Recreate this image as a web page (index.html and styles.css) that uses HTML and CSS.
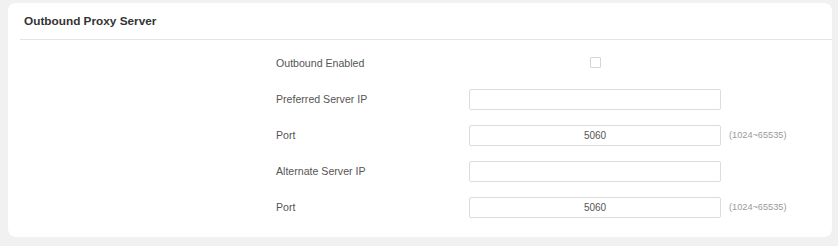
FILE: index.html
```html
<!DOCTYPE html>
<html lang="en">
<head>
  <meta charset="UTF-8" />
  <title>Outbound Proxy Server</title>
  <link rel="stylesheet" href="styles.css">
</head>
<body>
  <div class="card">
    <div class="card-header">
      <h3>Outbound Proxy Server</h3>
    </div>
    <div class="form">
      <div class="row">
        <label class="label">Outbound Enabled</label>
        <div class="field center">
          <span class="check"></span>
        </div>
      </div>
      <div class="row">
        <label class="label">Preferred Server IP</label>
        <div class="field"><input type="text" value=""></div>
      </div>
      <div class="row">
        <label class="label">Port</label>
        <div class="field"><input type="text" value="5060"></div>
        <span class="hint">(1024~65535)</span>
      </div>
      <div class="row">
        <label class="label">Alternate Server IP</label>
        <div class="field"><input type="text" value=""></div>
      </div>
      <div class="row">
        <label class="label">Port</label>
        <div class="field"><input type="text" value="5060"></div>
        <span class="hint">(1024~65535)</span>
      </div>
    </div>
  </div>
</body>
</html>
```

FILE: styles.css
```css
html, body {
  margin: 0;
  font-family: "Liberation Sans", Arial, sans-serif;
  background: #f1f1f2;
  color: #555555;
}
body {
  padding: 3px 6px 9px 8px;
}
.card {
  background: #ffffff;
  border-radius: 8px;
  height: 234px;
  box-sizing: border-box;
}
.card-header {
  margin-left: 12px;
  height: 36px;
  border-bottom: 1px solid #e4e4e4;
  display: flex;
  align-items: center;
  padding-left: 4px;
}
.card-header h3 {
  margin: 0;
  font-size: 11.8px;
  font-weight: bold;
  color: #333333;
}
.form {
  padding-top: 5px;
  padding-left: 268px;
}
.row {
  display: flex;
  align-items: center;
  height: 36px;
}
.label {
  width: 193px;
  font-size: 10.6px;
  color: #555555;
}
.field {
  width: 252px;
}
.field.center {
  display: flex;
  justify-content: center;
}
.check {
  width: 9px;
  height: 9px;
  border: 1px solid #d6d6d6;
  border-radius: 1px;
  margin-top: -1px;
  margin-left: 1px;
}
.field input {
  width: 100%;
  height: 21px;
  box-sizing: border-box;
  border: 1px solid #dcdcdc;
  border-radius: 2px;
  font-family: inherit;
  font-size: 10px;
  color: #555555;
  text-align: center;
  padding: 0;
}
.hint {
  margin-left: 8px;
  font-size: 9.2px;
  color: #9a9a9a;
}
```
